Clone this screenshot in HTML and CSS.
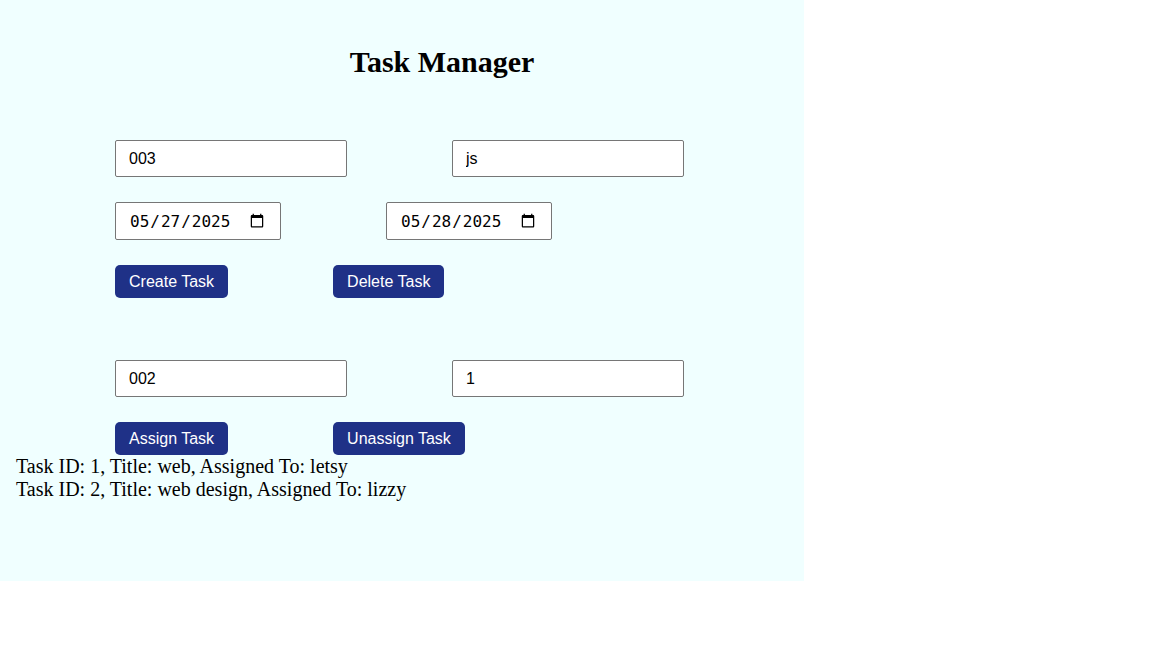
FILE: index.html
```html
<!DOCTYPE html>
<html>
<head>
<meta charset="utf-8">
<title>Task Manager</title>
<link rel="stylesheet" href="styles.css">
</head>
<body>
<div class="app">
  <h1 class="title">Task Manager</h1>
  <div class="form">
    <div class="row">
      <input class="field text" type="text" value="003">
      <input class="field text" type="text" value="js">
    </div>
    <div class="row">
      <input class="field date" type="date" value="2025-05-27">
      <input class="field date" type="date" value="2025-05-28">
    </div>
    <div class="row">
      <button class="btn">Create Task</button>
      <button class="btn">Delete Task</button>
    </div>
  </div>
  <div class="form second">
    <div class="row">
      <input class="field text" type="text" value="002">
      <input class="field text" type="text" value="1">
    </div>
    <div class="row">
      <button class="btn">Assign Task</button>
      <button class="btn">Unassign Task</button>
    </div>
  </div>
  <ul class="list">
    <li>Task ID: 1, Title: web, Assigned To: letsy</li>
    <li>Task ID: 2, Title: web design, Assigned To: lizzy</li>
  </ul>
</div>
</body>
</html>
```

FILE: styles.css
```css
html, body {
  margin: 0;
  padding: 0;
  background: #ffffff;
}
.app {
  width: 804px;
  height: 581px;
  box-sizing: border-box;
  background: #f0ffff;
  font-family: "Liberation Serif", "Times New Roman", serif;
  padding: 0 16px;
}
.title {
  margin: 0;
  padding-top: 43px;
  text-align: center;
  font-size: 30px;
  line-height: 37px;
  font-weight: bold;
  padding-left: 80px;
}
.form {
  margin-top: 60px;
  padding-left: 99px;
  display: flex;
  flex-direction: column;
  gap: 25px;
}
.form.second {
  margin-top: 62px;
}
.row {
  display: flex;
  gap: 105px;
  align-items: center;
}
.field {
  box-sizing: border-box;
  margin: 0;
  border: 1px solid #767676;
  border-radius: 2px;
  background: #ffffff;
  color: #000000;
}
.text {
  width: 232px;
  height: 37px;
  padding: 0 13px;
  font-family: "Liberation Sans", Arial, sans-serif;
  font-size: 16px;
}
.date {
  width: 166px;
  height: 38px;
  padding: 0 13px;
  font-family: "DejaVu Sans Mono", monospace;
  font-size: 16px;
}
.btn {
  margin: 0;
  height: 33px;
  padding: 0 14px;
  border: none;
  border-radius: 5px;
  background: #1f3187;
  color: #ffffff;
  font-family: "Liberation Sans", Arial, sans-serif;
  font-size: 16px;
}
.list {
  list-style: none;
  margin: 0;
  padding: 0;
  font-size: 20px;
  line-height: 23px;
}
```
